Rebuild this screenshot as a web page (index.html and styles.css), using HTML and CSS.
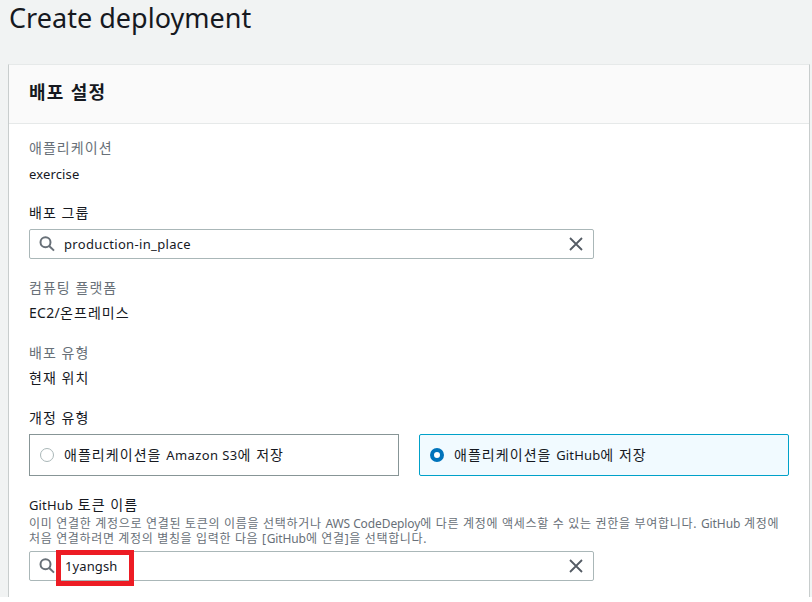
FILE: index.html
```html
<!DOCTYPE html>
<html lang="ko">
<head>
<meta charset="utf-8">
<title>Create deployment</title>
<link rel="stylesheet" href="styles.css">
</head>
<body>
<h1 class="title">Create deployment</h1>
<main class="card">
  <header class="card-header"><h2>배포 설정</h2></header>
  <div class="card-body">
    <section class="field">
      <div class="label muted">애플리케이션</div>
      <div class="value app-name"><span class="latin">exercise</span></div>
    </section>
    <section class="field">
      <div class="label">배포 그룹</div>
      <div class="search">
        <svg class="icon-search" viewBox="0 0 16 16"><circle cx="6.5" cy="6.3" r="5"/><path d="M10.2 10 15 14.6"/></svg>
        <span class="latin text">production-in_place</span>
        <svg class="icon-close" viewBox="0 0 16 16"><path d="M2 2 14 14M14 2 2 14"/></svg>
      </div>
    </section>
    <section class="field">
      <div class="label muted">컴퓨팅 플랫폼</div>
      <div class="value platform"><span class="latin">EC2/</span>온프레미스</div>
    </section>
    <section class="field">
      <div class="label muted">배포 유형</div>
      <div class="value">현재 위치</div>
    </section>
    <section class="field">
      <div class="label">개정 유형</div>
      <div class="tiles">
        <div class="tile"><span class="radio"></span><span>애플리케이션을 <span class="latin bucket">Amazon S3</span>에 저장</span></div>
        <div class="tile selected"><span class="radio"></span><span>애플리케이션을 <span class="latin">GitHub</span>에 저장</span></div>
      </div>
    </section>
    <section class="field">
      <div class="label token-label"><span class="latin">GitHub</span> 토큰 이름</div>
      <div class="hint"><div class="hint-first">이미 연결한 계정으로 연결된 토큰의 이름을 선택하거나 <span class="latin">AWS CodeDeploy</span>에 다른 계정에 액세스할 수 있는 권한을 부여합니다. <span class="latin">GitHub</span> 계정에</div><div class="hint-second">처음 연결하려면 계정의 별칭을 입력한 다음 [<span class="latin">GitHub</span>에 연결]을 선택합니다.</div></div>
      <div class="search">
        <svg class="icon-search" viewBox="0 0 16 16"><circle cx="6.5" cy="6.3" r="5"/><path d="M10.2 10 15 14.6"/></svg>
        <span class="latin text token">1yangsh</span>
        <svg class="icon-close" viewBox="0 0 16 16"><path d="M2 2 14 14M14 2 2 14"/></svg>
        <span class="highlight"></span>
      </div>
    </section>
  </div>
</main>
</body>
</html>
```
FILE: styles.css
```css
* { box-sizing: border-box; }
html { background: #fff; }
body {
  margin: 0;
  height: 597px;
  overflow: hidden;
  background: #f1f3f3;
  color: #16191f;
  font: 14px/22px "Noto Sans", "Noto Sans CJK KR", sans-serif;
}
/* The page ends at 597px; the root below it stays white. */
.title {
  margin: 0;
  padding: 0 0 0 9px;
  height: 64px;
  font-size: 27px;
  line-height: 35px;
  font-weight: 400;
  letter-spacing: 0.02px;
}
.card {
  width: 802px;
  height: 560px;
  margin-left: 8px;
  background: #fff;
  border: 1px solid #c8cdcd;
  border-top-color: #e6e9e9;
}
.card-header {
  height: 59px;
  padding: 16px 20px 0;
  background: #fafafa;
  border-bottom: 1px solid #e6e9e9;
}
.card-header h2 {
  margin: 0;
  font-size: 18px;
  line-height: 22px;
  font-weight: 700;
  letter-spacing: 1.3px;
}
.card-body {
  display: flex;
  flex-direction: column;
  gap: 18px;
  padding: 13px 20px 0;
}
.field { letter-spacing: 1.05px; }
.label { height: 22px; }
.muted { color: #687078; }
.value { height: 22px; margin-top: 3px; }
.latin { font-size: 13px; letter-spacing: 0.15px; }
.app-name { line-height: 24px; }
.platform .latin { font-size: 14px; letter-spacing: 0.3px; }
.bucket { letter-spacing: 0.4px; }
.search {
  position: relative;
  display: flex;
  align-items: center;
  width: 565px;
  height: 30px;
  margin-top: 5px;
  padding: 0 9px;
  border: 1px solid #aab7b8;
  border-radius: 2px;
}
.search .text { flex: 1; margin-left: 9px; letter-spacing: 0.33px; }
.search .token { margin-left: 10px; letter-spacing: 0.1px; }
.icon-search, .icon-close {
  width: 16px;
  height: 16px;
  fill: none;
  stroke: #687078;
  stroke-width: 2;
}
.icon-close { stroke: #545b64; stroke-width: 1.8; }
.tiles { display: grid; grid-template-columns: 370px 370px; gap: 20px; margin-top: 5px; }
.tile {
  display: flex;
  align-items: center;
  gap: 10px;
  height: 42px;
  padding-left: 10px;
  border: 1px solid #879596;
}
.selected { background: #f1faff; border-color: #00a1c9; border-radius: 2px; }
.radio {
  width: 14px;
  height: 14px;
  border: 1px solid #aab7b8;
  border-radius: 50%;
  background: #fff;
}
.selected .radio { border: 4px solid #0073bb; }
.hint {
  color: #687078;
  font-size: 12px;
  line-height: 15px;
  white-space: nowrap;
  letter-spacing: 0.69px;
}
.hint .latin { font-size: 12px; letter-spacing: -0.1px; }
.hint-second { letter-spacing: 0.65px; }
.hint + .search { margin-top: 5px; }
.highlight {
  position: absolute;
  left: 26px;
  top: -2px;
  width: 78px;
  height: 36px;
  border: 5px solid #ed1c24;
}
```
